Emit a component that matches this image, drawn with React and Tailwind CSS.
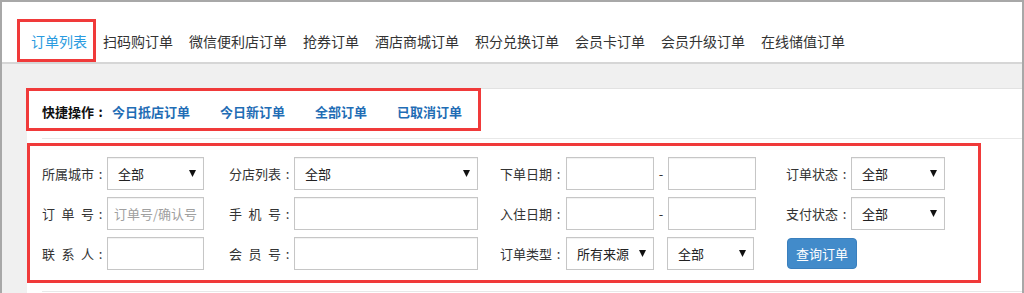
import React from "react";

const Arrow = () => (
  <svg width="7" height="7" viewBox="0 0 7 7" className="shrink-0">
    <polygon points="0,0 7,0 3.5,7" fill="#111" />
  </svg>
);

const Colon = () => <span className="w-[13px] shrink-0 text-center">:</span>;

const Select = ({ w, value }) => (
  <div
    className={`${w} h-[33px] flex items-center justify-between pl-[10px] pr-[7px] border border-[#c6c6c6] bg-white text-[13px] text-[#222] shadow-[inset_0_1px_1px_rgba(0,0,0,0.06)]`}
  >
    <span>{value}</span>
    <Arrow />
  </div>
);

const Input = ({ w, placeholder }) => (
  <div
    className={`${w} h-[33px] flex items-center pl-[6px] border border-[#c6c6c6] bg-white text-[13px] text-[#a0a0a0] shadow-[inset_0_1px_1px_rgba(0,0,0,0.06)]`}
  >
    {placeholder}
  </div>
);

const Label = ({ text, w = "w-[65px]" }) => (
  <div className={`${w} shrink-0 flex text-[13px] text-[#333] whitespace-nowrap`}>
    <span>{text}</span>
    <Colon />
  </div>
);

const SpacedLabel = ({ chars }) => (
  <div className="w-[65px] shrink-0 flex text-[13px] text-[#333]">
    <div className="w-[52px] flex justify-between">
      {chars.map((c, i) => (
        <span key={i}>{c}</span>
      ))}
    </div>
    <Colon />
  </div>
);

const Dash = () => (
  <div className="w-[14px] text-center text-[13px] text-[#333]">-</div>
);

export default function App() {
  const navItems = [
    "扫码购订单",
    "微信便利店订单",
    "抢券订单",
    "酒店商城订单",
    "积分兑换订单",
    "会员卡订单",
    "会员升级订单",
    "在线储值订单",
  ];
  const quick = ["今日抵店订单", "今日新订单", "全部订单", "已取消订单"];

  return (
    <div className="w-[1024px] h-[293px] overflow-hidden bg-white border-t-2 border-l-2 border-r-2 border-[#a8a8a8] font-['Noto_Sans_CJK_SC','Liberation_Sans',sans-serif] leading-none flex flex-col">
      {/* top nav */}
      <div className="h-[62px] shrink-0 bg-white border-b-2 border-[#d6d6d6] pt-[17px] pl-[15px] flex items-start">
        <div className="h-[43px] border-[3px] border-[#f03a3a] pl-[11px] pr-[6px] flex items-center text-[14px] text-[#2a9be0]">
          订单列表
        </div>
        <div className="h-[43px] flex items-center ml-[7px] gap-4 text-[14px] text-[#333]">
          {navItems.map((n) => (
            <span key={n}>{n}</span>
          ))}
        </div>
      </div>

      {/* body */}
      <div className="flex-1 bg-[#f0f0f0] pt-[24px] pl-[25px] flex flex-col">
        <div className="flex-1 bg-white border-t border-[#e2e2e2] flex flex-col">
          <div className="-mt-px -ml-px w-[455px] h-[43px] border-[3px] border-[#f03a3a] pl-[13px] pt-[3px] flex items-center text-[13px] font-bold">
            <span className="text-[#111] flex">
              快捷操作
              <Colon />
            </span>
            <div className="ml-[5px] flex gap-[30px] text-[#1f6db5]">
              {quick.map((q) => (
                <span key={q}>{q}</span>
              ))}
            </div>
          </div>

          <div className="mt-[7px] ml-[15px] border-y border-[#e8e8e8] pt-[4px] pb-[8px]">
            <div className="-ml-[15px] w-[954px] h-[140px] border-[3px] border-[#f03a3a] pt-[11px] pl-[12px] flex flex-col gap-[7px]">
              {/* row 1 */}
              <div className="flex items-center">
                <Label text="所属城市" />
                <Select w="w-[97px]" value="全部" />
                <div className="ml-[25px] flex items-center">
                  <Label text="分店列表" />
                  <Select w="w-[184px]" value="全部" />
                </div>
                <div className="ml-[22px] flex items-center">
                  <Label text="下单日期" w="w-[66px]" />
                  <Input w="w-[88px]" />
                  <Dash />
                  <Input w="w-[88px]" />
                </div>
                <div className="ml-[30px] flex items-center">
                  <Label text="订单状态" />
                  <Select w="w-[94px]" value="全部" />
                </div>
              </div>
              {/* row 2 */}
              <div className="flex items-center">
                <SpacedLabel chars={["订", "单", "号"]} />
                <Input w="w-[97px]" placeholder="订单号/确认号" />
                <div className="ml-[25px] flex items-center">
                  <SpacedLabel chars={["手", "机", "号"]} />
                  <Input w="w-[184px]" />
                </div>
                <div className="ml-[22px] flex items-center">
                  <Label text="入住日期" w="w-[66px]" />
                  <Input w="w-[88px]" />
                  <Dash />
                  <Input w="w-[88px]" />
                </div>
                <div className="ml-[30px] flex items-center">
                  <Label text="支付状态" />
                  <Select w="w-[94px]" value="全部" />
                </div>
              </div>
              {/* row 3 */}
              <div className="flex items-center">
                <SpacedLabel chars={["联", "系", "人"]} />
                <Input w="w-[97px]" />
                <div className="ml-[25px] flex items-center">
                  <SpacedLabel chars={["会", "员", "号"]} />
                  <Input w="w-[184px]" />
                </div>
                <div className="ml-[22px] flex items-center">
                  <Label text="订单类型" w="w-[66px]" />
                  <Select w="w-[88px]" value="所有来源" />
                  <div className="w-[13px]" />
                  <Select w="w-[87px]" value="全部" />
                </div>
                <button className="ml-[33px] w-[70px] h-[31px] rounded-[4px] bg-[#428bca] border border-[#3a7fbd] text-white text-[13px] flex items-center justify-center">
                  查询订单
                </button>
              </div>
            </div>
          </div>
        </div>
      </div>
    </div>
  );
}
